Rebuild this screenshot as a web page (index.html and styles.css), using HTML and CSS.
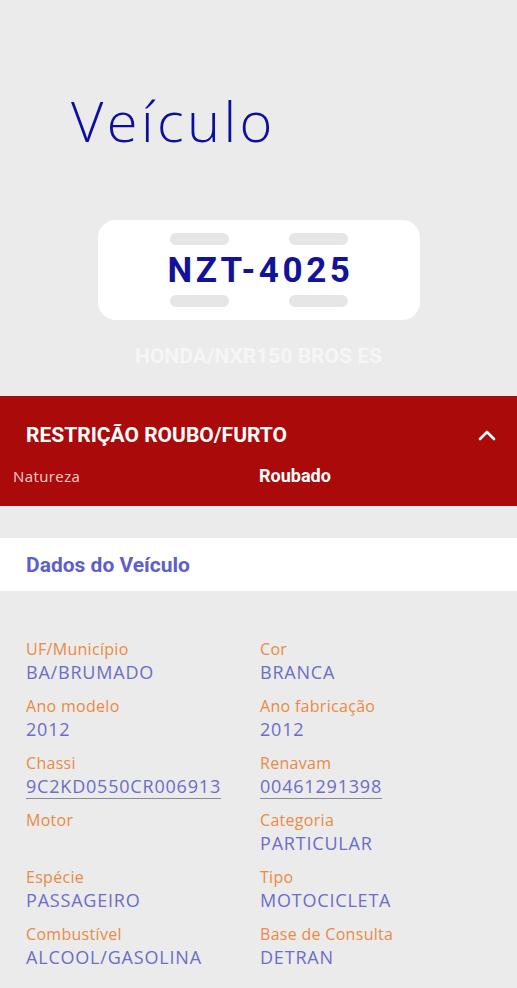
FILE: index.html
```html
<!DOCTYPE html>
<html lang="pt-BR">

<head>
  <meta charset="utf-8">
  <title>Veículo</title>
  <link rel="stylesheet" href="styles.css">
</head>

<body>
  <div class="page">
    <h1 class="pageTitle">Veículo</h1>

    <!-- placa -->
    <div class="plate">
      <div class="pins"><span></span><span></span></div>
      <div class="plateNumber">NZT-4025</div>
      <div class="pins"><span></span><span></span></div>
    </div>
    <p class="model">HONDA/NXR150 BROS ES</p>

    <!-- restrição -->
    <div class="alert">
      <div class="alertHead">
        <span>RESTRIÇÃO ROUBO/FURTO</span>
        <svg class="chevron" width="18" height="12" viewBox="0 0 18 12">
          <path d="M2 10 L9 3 L16 10" fill="none" stroke="#fff" stroke-width="2.6" stroke-linecap="round" stroke-linejoin="round"/>
        </svg>
      </div>
      <div class="alertRow">
        <span class="alertLabel">Natureza</span>
        <span class="alertValue">Roubado</span>
      </div>
    </div>

    <div class="sectionTitle">Dados do Veículo</div>

    <!-- dados -->
    <div class="dataGrid">
      <div class="item"><div class="label">UF/Município</div><div class="value">BA/BRUMADO</div></div>
      <div class="item"><div class="label">Cor</div><div class="value">BRANCA</div></div>
      <div class="item"><div class="label">Ano modelo</div><div class="value">2012</div></div>
      <div class="item"><div class="label">Ano fabricação</div><div class="value">2012</div></div>
      <div class="item"><div class="label">Chassi</div><div class="value"><span class="link">9C2KD0550CR006913</span></div></div>
      <div class="item"><div class="label">Renavam</div><div class="value"><span class="link">00461291398</span></div></div>
      <div class="item"><div class="label">Motor</div><div class="value"></div></div>
      <div class="item"><div class="label">Categoria</div><div class="value">PARTICULAR</div></div>
      <div class="item"><div class="label">Espécie</div><div class="value">PASSAGEIRO</div></div>
      <div class="item"><div class="label">Tipo</div><div class="value">MOTOCICLETA</div></div>
      <div class="item"><div class="label">Combustível</div><div class="value">ALCOOL/GASOLINA</div></div>
      <div class="item"><div class="label">Base de Consulta</div><div class="value">DETRAN</div></div>
    </div>
  </div>
</body>

</html>
```

FILE: styles.css
```css
* {
  margin: 0;
  padding: 0;
}

body {
  background: #ebebeb;
  font-family: "Open Sans", "DejaVu Sans", sans-serif;
}

.page {
  width: 517px;
  height: 988px;
  overflow: hidden;
}

/* titulo */
.pageTitle {
  font-family: "Open Sans", sans-serif;
  font-weight: 300;
  font-size: 56px;
  letter-spacing: 3.4px;
  line-height: 60px;
  color: #0c0f9c;
  padding: 90px 0 0 71px;
}

/* placa */
.plate {
  width: 322px;
  height: 100px;
  margin: 70px 0 0 98px;
  background: #fff;
  border-radius: 18px;
  box-sizing: border-box;
  padding-top: 13px;
}

.pins {
  display: flex;
  justify-content: center;
  gap: 60px;
}

.pins span {
  display: block;
  width: 59px;
  height: 12px;
  border-radius: 6px;
  background: #e6e6e6;
}

.plateNumber {
  height: 50px;
  line-height: 51px;
  text-align: center;
  font-family: Roboto, sans-serif;
  font-weight: 700;
  font-size: 35px;
  letter-spacing: 3.6px;
  text-indent: 3px;
  color: #12129a;
}

.model {
  text-align: center;
  font-family: Roboto, sans-serif;
  font-weight: 700;
  font-size: 21px;
  line-height: 22px;
  color: #f6f6f6;
  margin-top: 25px;
}

/* faixa vermelha */
.alert {
  background: #ab0a0a;
  height: 110px;
  margin-top: 29px;
  color: #fff;
}

.alertHead {
  display: flex;
  justify-content: space-between;
  align-items: center;
  padding: 26px 21px 0 26px;
  font-family: Roboto, sans-serif;
  font-weight: 700;
  font-size: 21px;
  line-height: 26px;
}

.alertRow {
  display: flex;
  align-items: baseline;
  padding: 17px 0 0 13px;
}

.alertLabel {
  width: 246px;
  font-size: 15px;
  letter-spacing: 0.4px;
  color: #f5cfcf;
}

.alertValue {
  font-family: Roboto, sans-serif;
  font-weight: 700;
  font-size: 18px;
}

.sectionTitle {
  margin-top: 32px;
  height: 53px;
  line-height: 54px;
  background: #fff;
  padding-left: 26px;
  font-family: Roboto, sans-serif;
  font-weight: 700;
  font-size: 21px;
  color: #5d5fcb;
}

/* grade de dados */
.dataGrid {
  display: grid;
  grid-template-columns: 234px 1fr;
  grid-auto-rows: 57px;
  padding: 47px 0 0 26px;
}

.label {
  font-size: 16px;
  letter-spacing: 0.3px;
  line-height: 22px;
  color: #ea8a45;
}

.value {
  font-size: 18px;
  letter-spacing: 0.8px;
  line-height: 25px;
  color: #6b6dc9;
  height: 25px;
}

.link {
  border-bottom: 1px solid #8a8a9a;
}
```
